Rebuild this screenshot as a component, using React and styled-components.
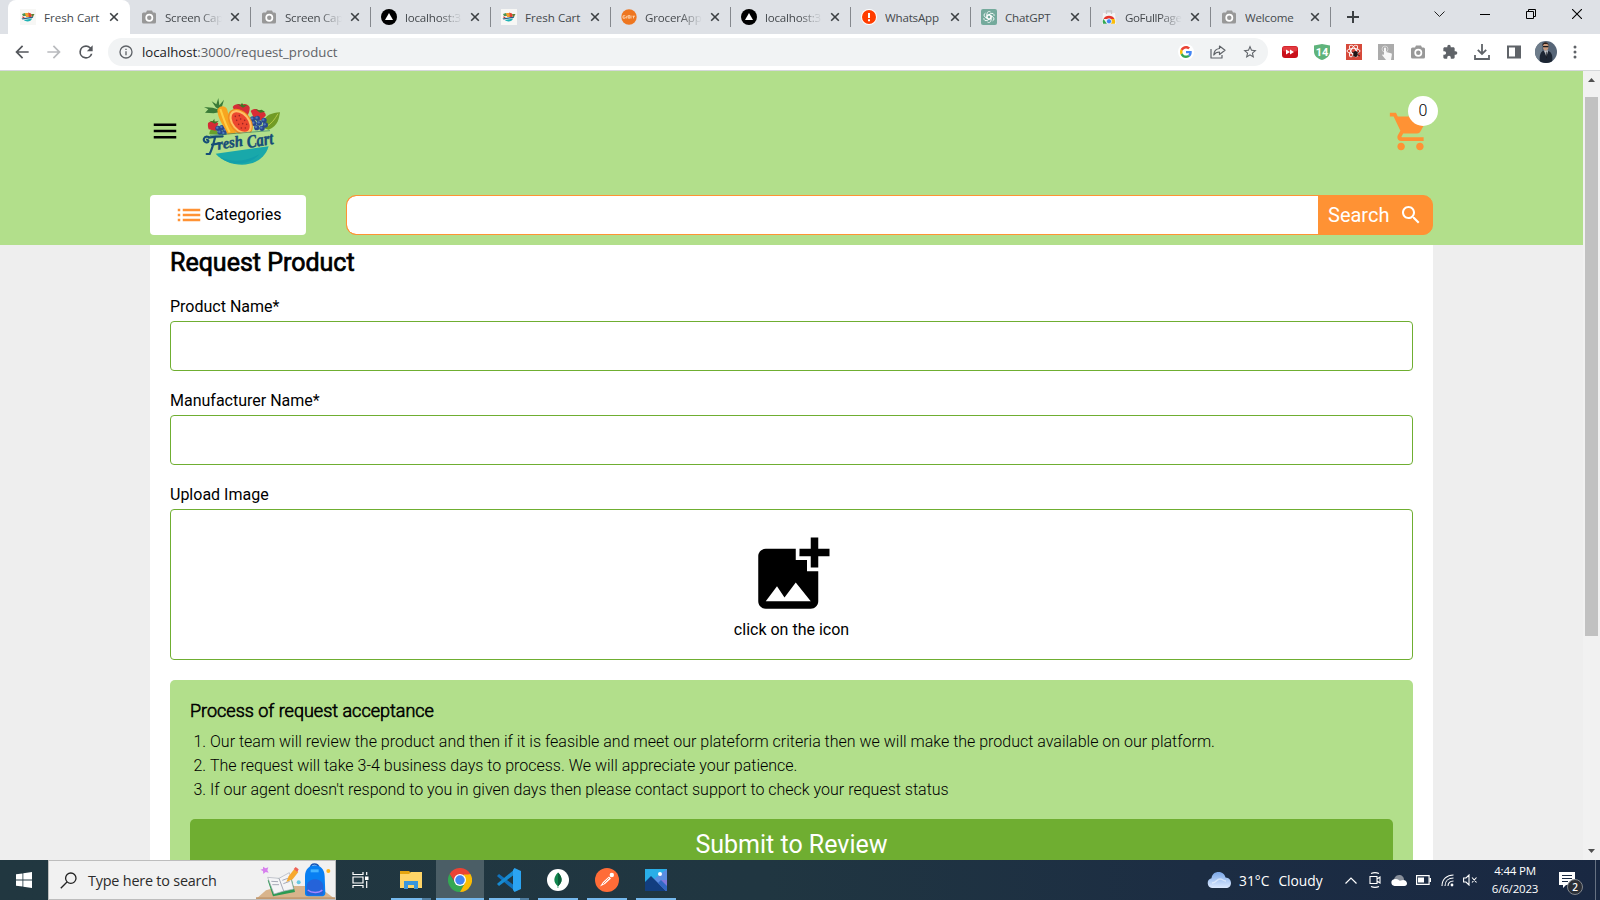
import React from "react";
import styled, { createGlobalStyle } from "styled-components";

const GlobalStyle = createGlobalStyle`
  *, *::before, *::after { box-sizing: border-box; }
  html, body { margin: 0; padding: 0; overflow: hidden; }
  body { font-family: Roboto, "Liberation Sans", sans-serif; color: #000; }
  svg { display: block; flex: none; }
  button, input { font-family: inherit; border: 0; padding: 0; margin: 0; }
`;

const UI_FONT = `"Open Sans", "Noto Sans", sans-serif`;

const Screen = styled.div`
  width: 1600px;
  height: 900px;
  display: flex;
  flex-direction: column;
  overflow: hidden;
`;

/* ---------- browser window ---------- */

const TabStrip = styled.div`
  height: 34px;
  background: #dee1e6;
  display: flex;
  padding-left: 8px;
  flex: none;
`;

const Tab = styled.div`
  width: ${(p) => (p.$active ? 122 : 120)}px;
  height: 34px;
  display: flex;
  align-items: center;
  padding: 0 11px 0 ${(p) => (p.$active ? 12 : 11)}px;
  background: ${(p) => (p.$active ? "#fff" : "transparent")};
  border-radius: 8px 8px 0 0;
  flex: none;
`;

const TabTitle = styled.span`
  font: 400 11.6px ${UI_FONT};
  letter-spacing: ${(p) => p.$track || 0}px;
  color: #45494d;
  width: 57px;
  margin-left: 8px;
  margin-right: 5px;
  white-space: nowrap;
  overflow: hidden;
  flex: none;
  ${(p) => p.$fade && "mask-image: linear-gradient(90deg, #000 60%, transparent 100%);"}
`;

const TabDivider = styled.div`
  width: 1px;
  height: 20px;
  margin-top: 7px;
  margin-right: -1px;
  background: ${(p) => (p.$hidden ? "transparent" : "#85888d")};
  flex: none;
`;

const NewTab = styled.div`
  width: 46px;
  display: flex;
  align-items: center;
  justify-content: center;
`;

const WindowButtons = styled.div`
  margin-left: auto;
  display: flex;
  height: 28px;
`;

const WindowButton = styled.div`
  width: 46px;
  display: flex;
  align-items: center;
  justify-content: center;
`;

const Toolbar = styled.div`
  height: 37px;
  background: #fff;
  border-bottom: 1px solid #d5d7da;
  display: flex;
  align-items: center;
  padding: 0 11px 0 12px;
  flex: none;
`;

const NavButton = styled.div`
  width: 32px;
  display: flex;
  justify-content: center;
  padding-right: 12px;
`;

const AddressBar = styled.div`
  width: 1160px;
  height: 28px;
  border-radius: 14px;
  background: #f1f3f4;
  display: flex;
  align-items: center;
  padding: 0 10px;
`;

const Address = styled.span`
  font: 400 13.2px ${UI_FONT};
  color: #5f6368;
  margin-left: 8px;
  flex: 1;
  b { font-weight: 400; color: #202124; }
`;

const AddressActions = styled.div`
  display: flex;
  gap: 16px;
`;

const Extensions = styled.div`
  display: flex;
  align-items: center;
  gap: 16px;
  margin-left: 14px;
  svg:nth-last-child(2) { margin: 0 -3px; }
  svg:last-child { margin-left: 3px; }
`;

const Viewport = styled.div`
  height: 789px;
  display: flex;
  background: #eee;
  overflow: hidden;
  flex: none;
`;

const Page = styled.div`
  width: 1583px;
  overflow: hidden;
`;

const ScrollTrack = styled.div`
  width: 17px;
  background: #f1f1f1;
  display: flex;
  flex-direction: column;
  align-items: center;
  padding: 7px 0;
  justify-content: space-between;
`;

const ScrollThumb = styled.div`
  width: 13px;
  height: 539px;
  background: #c1c1c1;
  margin: 15px 0 auto;
`;

/* ---------- shop header ---------- */

const Header = styled.header`
  height: 174px;
  background: #b2df8b;
  padding: 0 150px;
`;

const TopRow = styled.div`
  height: 120px;
  margin-bottom: 4px;
  display: flex;
  align-items: center;
`;

const Brand = styled.div`
  margin-left: 22px;
`;

const CartLink = styled.div`
  position: relative;
  margin-left: auto;
`;

const CartBadge = styled.span`
  position: absolute;
  top: -13px;
  right: -5px;
  width: 30px;
  height: 30px;
  border-radius: 50%;
  background: #fff;
  font-size: 16px;
  font-weight: 300;
  line-height: 29px;
  text-align: center;
`;

const SearchRow = styled.div`
  height: 40px;
  display: flex;
  gap: 40px;
`;

const CategoriesButton = styled.button`
  width: 156px;
  border-radius: 4px;
  background: #fff;
  color: #000;
  font-size: 16px;
  line-height: 38px;
  display: flex;
  align-items: center;
  justify-content: center;
  svg { margin-right: 1px; margin-left: -1px; }
`;

const SearchBox = styled.div`
  flex: 1;
  display: flex;
  border: 1px solid #ff9234;
  border-radius: 10px;
  background: #ff9234;
  overflow: hidden;
`;

const SearchInput = styled.input`
  flex: 1;
  background: #fff;
  border-radius: 9px 0 0 9px;
  outline: none;
`;

const SearchButton = styled.button`
  width: 114px;
  background: #ff9234;
  color: #fff;
  font-size: 20px;
  display: flex;
  align-items: center;
  justify-content: space-between;
  padding: 0 9px 0 10px;
`;

/* ---------- request form ---------- */

const Panel = styled.main`
  width: 1283px;
  height: 700px;
  margin: 0 auto;
  padding: 0 20px;
  background: #fff;
`;

const Title = styled.h1`
  margin: 0;
  height: 47px;
  line-height: 36px;
  font-size: 25px;
  font-weight: 400;
  -webkit-text-stroke: 0.7px #000;
`;

const Field = styled.div`
  margin-bottom: ${(p) => (p.$last ? 20 : 15)}px;
`;

const Label = styled.label`
  display: block;
  height: 29px;
  line-height: 29px;
  font-size: 16px;
`;

const TextInput = styled.input`
  display: block;
  width: 100%;
  height: 50px;
  border: 1px solid #6fae31;
  border-radius: 4px;
  background: #fff;
  outline: none;
`;

const UploadBox = styled.div`
  height: 151px;
  border: 1px solid #6fae31;
  border-radius: 4px;
  display: flex;
  flex-direction: column;
  align-items: center;
  padding-top: 20px;
  font-size: 16px;
  line-height: 19px;
`;

const Process = styled.section`
  height: 240px;
  background: #b2df8b;
  border-radius: 5px;
  padding: 20px;
`;

const ProcessTitle = styled.h2`
  margin: 0 0 4px;
  font-size: 18px;
  line-height: 22px;
  font-weight: 300;
  -webkit-text-stroke: 0.6px #000;
`;

const Steps = styled.ol`
  margin: 0;
  padding: 4px 0 0 20px;
  font-size: 16px;
  font-weight: 300;
  line-height: 24px;
`;

const SubmitButton = styled.button`
  display: block;
  width: 100%;
  height: 52px;
  margin-top: 17px;
  border-radius: 5px;
  background: #6fae31;
  color: #fff;
  font-size: 25px;
  line-height: 52px;
`;

/* ---------- desktop taskbar ---------- */

const Taskbar = styled.footer`
  height: 40px;
  background: linear-gradient(90deg, #213740 0%, #203641 48%, #1c2d43 75%, #192842 100%);
  display: flex;
  font-family: ${UI_FONT};
  color: #fff;
  flex: none;
`;

const TaskSlot = styled.div`
  width: ${(p) => p.$w}px;
  height: 40px;
  display: flex;
  align-items: center;
  justify-content: center;
  padding-right: ${(p) => p.$end || 0}px;
  flex: none;
`;

const TaskApp = styled.div`
  width: ${(p) => (p.$active ? 48 : 40)}px;
  height: 40px;
  margin-right: ${(p) => p.$gap || 0}px;
  display: flex;
  flex-direction: column;
  align-items: center;
  justify-content: space-between;
  background: ${(p) => (p.$active ? "#4b5e66" : "transparent")};
  flex: none;
`;

const TaskIcon = styled.div`
  height: 38px;
  display: flex;
  align-items: center;
  padding-top: 2px;
`;

const Underline = styled.div`
  width: 100%;
  height: 2px;
  background: ${(p) => (p.$split ? "linear-gradient(90deg, #76b9ed 78%, #4f7d9f 78%)" : "#76b9ed")};
`;

const TaskSearch = styled.div`
  width: 288px;
  height: 40px;
  border: 1px solid #bdbdbd;
  background: #f1f1f1;
  display: flex;
  align-items: center;
  padding-left: 11px;
  color: #2b2b2b;
  font-size: 14.4px;
  letter-spacing: -0.2px;
  overflow: hidden;
  flex: none;
  span { margin-left: 11px; margin-right: auto; line-height: 20px; padding-top: 1px; white-space: nowrap; }
`;

const Tray = styled.div`
  margin-left: auto;
  display: flex;
  align-items: center;
  height: 40px;
`;

const Weather = styled.div`
  display: flex;
  align-items: center;
  font-size: 13.8px;
  width: 138px;
  white-space: nowrap;
  svg { margin-right: 8px; }
  span + span { margin-left: 9px; }
`;

const Clock = styled.div`
  width: 58px;
  font-size: 11.5px;
  line-height: 18px;
  letter-spacing: -0.2px;
  text-align: center;
`;

const Notice = styled.div`
  position: relative;
  width: 16px;
  margin-left: 15px;
`;

const NoticeCount = styled.span`
  position: absolute;
  left: 8px;
  top: 7px;
  width: 16px;
  height: 16px;
  border-radius: 50%;
  border: 1px solid #83878d;
  background: #2b2f36;
  font-size: 10px;
  line-height: 14px;
  font-weight: 600;
  text-align: center;
`;

const DesktopEdge = styled.div`
  width: 5px;
  height: 40px;
  margin-left: 20px;
  border-left: 1px solid #667182;
`;

/* ---------- icons ---------- */

const Glyph = ({ size = 24, color = "currentColor", d }) => (
  <svg width={size} height={size} viewBox="0 0 24 24" fill={color}>
    <path d={d} />
  </svg>
);

const PATHS = {
  menu: "M3 18h18v-2H3v2zm0-5h18v-2H3v2zm0-7v2h18V6H3z",
  cart: "M7 18c-1.1 0-1.99.9-1.99 2S5.9 22 7 22s2-.9 2-2-.9-2-2-2zM1 2v2h2l3.6 7.59-1.35 2.45c-.16.28-.25.61-.25.96 0 1.1.9 2 2 2h12v-2H7.42c-.14 0-.25-.11-.25-.25l.03-.12.9-1.63h7.45c.75 0 1.41-.41 1.75-1.03l3.58-6.49c.08-.14.12-.31.12-.48 0-.55-.45-1-1-1H5.21l-.94-2H1zm16 16c-1.1 0-1.99.9-1.99 2s.89 2 1.99 2 2-.9 2-2-.9-2-2-2z",
  search: "M15.5 14h-.79l-.28-.27C15.41 12.59 16 11.11 16 9.5 16 5.91 13.09 3 9.5 3S3 5.91 3 9.5 5.91 16 9.5 16c1.61 0 3.09-.59 4.23-1.57l.27.28v.79l5 4.99L20.49 19l-4.99-5zm-6 0C7.01 14 5 11.99 5 9.5S7.01 5 9.5 5 14 7.01 14 9.5 11.99 14 9.5 14z",
  list: "M3 13h2v-2H3v2zm0 4h2v-2H3v2zm0-8h2V7H3v2zm4 4h14v-2H7v2zm0 4h14v-2H7v2zM7 7v2h14V7H7z",
  addPhoto: "M19 7v2.99s-1.99.01-2 0V7h-3s.01-1.99 0-2h3V2h2v3h3v2h-3zm-3 4V8h-3V5H5c-1.1 0-2 .9-2 2v12c0 1.1.9 2 2 2h12c1.1 0 2-.9 2-2v-8h-3zM5 19l3-4 2 3 3-4 4 5H5z",
  back: "M20 11H7.83l5.59-5.59L12 4l-8 8 8 8 1.41-1.41L7.83 13H20v-2z",
  forward: "M12 4l-1.41 1.41L16.17 11H4v2h12.17l-5.58 5.59L12 20l8-8z",
  reload: "M17.65 6.35A7.96 7.96 0 0 0 12 4a8 8 0 1 0 7.73 10h-2.08A6 6 0 1 1 12 6c1.66 0 3.14.69 4.22 1.78L13 11h7V4l-2.35 2.35z",
  info: "M11 17h2v-6h-2v6zm1-15a10 10 0 1 0 0 20 10 10 0 0 0 0-20zm0 18a8 8 0 1 1 0-16 8 8 0 0 1 0 16zM11 9h2V7h-2v2z",
  star: "M22 9.24l-7.19-.62L12 2 9.19 8.63 2 9.24l5.46 4.73L5.82 21 12 17.27 18.18 21l-1.63-7.03L22 9.24zM12 15.4l-3.76 2.27 1-4.28-3.32-2.88 4.38-.38L12 6.1l1.71 4.04 4.38.38-3.32 2.88 1 4.28L12 15.4z",
  puzzle: "M20.5 11H19V7c0-1.1-.9-2-2-2h-4V3.5a2.5 2.5 0 0 0-5 0V5H4c-1.1 0-1.99.9-1.99 2v3.8H3.5a2.7 2.7 0 0 1 0 5.4H2V20c0 1.1.9 2 2 2h3.8v-1.5a2.7 2.7 0 0 1 5.4 0V22H17c1.1 0 2-.9 2-2v-4h1.5a2.5 2.5 0 0 0 0-5z",
};

const CameraIcon = () => (
  <svg width="16" height="16" viewBox="0 0 16 16">
    <path d="M2.500 3.500H5L6 1.500h5l1 2h1.500a1.500 1.500 0 0 1 1.500 1.500v8a1.500 1.500 0 0 1-1.500 1.500h-11A1.500 1.500 0 0 1 1 13V5a1.500 1.500 0 0 1 1.500-1.500z" fill="#989898" />
    <circle cx="8.300" cy="8.700" r="3.100" fill="none" stroke="#fff" strokeWidth="1.700" />
  </svg>
);

const NextIcon = () => (
  <svg width="16" height="16" viewBox="0 0 16 16">
    <circle cx="8" cy="8" r="8" />
    <path d="M8 4l4 7H4z" fill="#fff" />
  </svg>
);

const FruitIcon = () => (
  <svg width="16" height="16" viewBox="0 0 16 16">
    <path fill="#f7f7f5" d="M0 0h16v16H0z" />
    <path d="M2 5l3-1 2 3H3z" fill="#4d9252" />
    <path d="M5 4h3l2 4H6z" fill="#f5a02d" />
    <path d="M8 3.500l3 1 1 3-3 1z" fill="#e2432e" />
    <path d="M11 5l3.500 0-2 3.500z" fill="#5f7f2f" />
    <path d="M2 7.500l3 .5-2 1.500z" fill="#c63634" />
    <path d="M1.500 9.500l12-2-1 1.500-10 1.500z" fill="#245f85" />
    <path d="M4 11l8-1.500c-.5 3-6 4-8 1.500z" fill="#1fb2b5" />
  </svg>
);

const GrocerIcon = () => (
  <svg width="16" height="16" viewBox="0 0 16 16">
    <circle cx="8" cy="8" r="7.700" fill="#ee7620" />
    <path d="M4.300 6.800H2v2.400h2.200V8M5.700 9.500V7.200h1M7.300 6.500h1.500v2.700H7.300zM10 6.500v3M11.500 7.200H14M12.500 7.200v2.200" fill="none" stroke="#ffe2c4" strokeWidth=".8" />
  </svg>
);

const AlertIcon = () => (
  <svg width="16" height="16" viewBox="0 0 16 16">
    <circle cx="8" cy="8" r="8" fill="#fff" />
    <circle cx="8" cy="8" r="7" fill="#ff3d00" />
    <path d="M7 4h2v5H7zM7 10.300h2v2H7z" fill="#fff" />
  </svg>
);

const GptIcon = () => (
  <svg width="16" height="16" viewBox="0 0 16 16">
    <rect width="16" height="16" rx="2" fill="#74aa9c" />
    <g fill="none" stroke="#fff" strokeWidth=".8">
      {[0, 60, 120, 180, 240, 300].map((a) => (
        <path key={a} transform={`rotate(${a} 8 8)`} d="M6 9.200V4.800a2.200 2.200 0 0 1 3.600-1.800M6 6.900l2-1.200 3.400 2" />
      ))}
    </g>
  </svg>
);

const StoreIcon = () => (
  <svg width="16" height="16" viewBox="0 0 16 16">
    <path d="M2 4h12l1 11H1z" fill="#f5f5f5" />
    <path d="M5.500 5V2h5v3" fill="none" stroke="#c9c9c9" strokeWidth="1.300" />
    <path d="M2.500 10a6 5.500 0 0 1 11 0z" fill="#e5372c" />
    <path d="M2.500 10L6 14.800H2a5 5 0 0 1 .5-4.800z" fill="#35a853" />
    <path d="M10 10h3.500c.8 1.600.8 3.300.3 4.800H8z" fill="#fbbd09" />
    <circle cx="8" cy="12.300" r="2.600" fill="#4285f4" stroke="#fff" strokeWidth=".8" />
  </svg>
);

const CloseIcon = () => (
  <svg width="16" height="16" viewBox="0 0 16 16">
    <path d="M4.200 4.200l7.600 7.600M11.800 4.200l-7.600 7.600" stroke="#3c4043" strokeWidth="1.600" />
  </svg>
);

const GoogleIcon = () => (
  <svg width="16" height="16" viewBox="0 0 48 48">
    <circle cx="24" cy="24" r="24" fill="#fff" />
    <g transform="translate(6 6) scale(.75)">
      <path fill="#ea4335" d="M24 9.500c3.540 0 6.710 1.220 9.210 3.600l6.850-6.850C35.900 2.380 30.470 0 24 0 14.620 0 6.510 5.380 2.560 13.220l7.980 6.190C12.430 13.720 17.740 9.500 24 9.500z" />
      <path fill="#4285f4" d="M46.980 24.550c0-1.570-.15-3.090-.38-4.550H24v9.020h12.940c-.58 2.960-2.260 5.480-4.780 7.180l7.730 6c4.510-4.180 7.090-10.360 7.090-17.650z" />
      <path fill="#fbbc05" d="M10.530 28.590c-.48-1.450-.76-2.990-.76-4.590s.27-3.140.76-4.590l-7.980-6.190C.92 16.460 0 20.120 0 24c0 3.880.92 7.540 2.560 10.780l7.970-6.190z" />
      <path fill="#34a853" d="M24 48c6.480 0 11.930-2.130 15.890-5.810l-7.730-6c-2.150 1.450-4.920 2.300-8.160 2.300-6.260 0-11.570-4.220-13.470-9.910l-7.980 6.190C6.510 42.620 14.620 48 24 48z" />
    </g>
  </svg>
);

const ShareIcon = () => (
  <svg width="16" height="16" viewBox="0 0 16 16" fill="none" stroke="#5f6368" strokeWidth="1.200" strokeLinejoin="round">
    <path d="M1 5v9h11v-3M9.500 2l5.500 4.300-5.500 4.200V8C6.500 8 5 9 3.800 11 4 7 6 4.800 9.500 4.500z" />
  </svg>
);

const RedForwardIcon = () => (
  <svg width="16" height="16" viewBox="0 0 16 16">
    <rect y="2" width="16" height="12" rx="3" fill="#c9101a" />
    <rect x=".5" y="2.500" width="15" height="5" rx="2.500" fill="#e23a40" />
    <path d="M4 5.500L8 8l-4 2.500zM8 5.500L12 8l-4 2.500z" fill="#fff" />
  </svg>
);

const ShieldIcon = () => (
  <svg width="16" height="16" viewBox="0 0 16 16">
    <path d="M8 0l8 1.500v6C16 12 12.500 14.500 8 16 3.500 14.500 0 12 0 7.500v-6z" fill="#5fb37b" />
    <text x="8" y="11.500" fontSize="11" fontWeight="700" fontFamily="Roboto, sans-serif" fill="#fff" textAnchor="middle">14</text>
  </svg>
);

const BugIcon = () => (
  <svg width="16" height="16" viewBox="0 0 16 16">
    <path fill="#d6493a" d="M0 0h16v16H0z" />
    <g fill="none" stroke="#fff" strokeWidth=".9">
      <ellipse cx="7.500" cy="7" rx="6.500" ry="2.500" />
      <ellipse cx="7.500" cy="7" rx="6.500" ry="2.500" transform="rotate(60 7.500 7)" />
      <ellipse cx="7.500" cy="7" rx="6.500" ry="2.500" transform="rotate(120 7.500 7)" />
    </g>
    <ellipse cx="9.500" cy="10" rx="2.200" ry="3" fill="#1e1515" />
    <path d="M6 8l8 4M13 7.500L6.500 12.500" stroke="#1e1515" strokeWidth=".8" />
  </svg>
);

const TouchIcon = () => (
  <svg width="16" height="16" viewBox="0 0 16 16">
    <path fill="#ababab" d="M0 0h16v16H0z" />
    <circle cx="7" cy="5" r="3" fill="none" stroke="#d4d4d4" />
    <path d="M6 4.500a1 1 0 0 1 2 0V8l5 1.200c1 .3 1 1 .8 2L13 16H8l-4-5 1-.8 1 .8z" fill="#f7f7f7" />
  </svg>
);

const DownloadIcon = () => (
  <svg width="16" height="16" viewBox="0 0 16 16" fill="none" stroke="#5f6368" strokeWidth="1.800">
    <path d="M8 0v9.500M3.800 5.800L8 10l4.200-4.200M1 11v4h14v-4" />
  </svg>
);

const SidePanelIcon = () => (
  <svg width="16" height="16" viewBox="0 0 16 16">
    <path d="M1 1.500h14v13H1zM3 3.500v9h6v-9z" fill="#5f6368" fillRule="evenodd" />
  </svg>
);

const Avatar = () => (
  <svg width="22" height="22" viewBox="0 0 22 22">
    <defs>
      <clipPath id="avatarClip"><circle cx="11" cy="11" r="11" /></clipPath>
    </defs>
    <g clipPath="url(#avatarClip)">
      <path d="M0 0h22v22H0z" fill="#566577" />
      <path d="M0 0h7v22H0z" fill="#6e7d8b" />
      <path d="M5 22c-1-6 0-11 3-12h5c4 1 5 5 4 12z" fill="#1c2533" />
      <path d="M9 9.500h4L11.500 16z" fill="#e5e8ec" />
      <path d="M10.700 10.500h.9l.3 6-.8 1z" fill="#16181e" />
      <ellipse cx="10.700" cy="5.500" rx="2.800" ry="3.900" fill="#c99a7c" />
      <path d="M7.500 5c-.5-5 6.500-5 6 0l-1-2H9z" fill="#2a1f1b" />
      <path d="M8 5h5.500v1.300H8z" fill="#1b1a1c" />
    </g>
  </svg>
);

const DotsIcon = () => (
  <svg width="4" height="16" viewBox="0 0 4 16" fill="#5f6368">
    <circle cx="2" cy="3" r="1.500" /><circle cx="2" cy="8" r="1.500" /><circle cx="2" cy="13" r="1.500" />
  </svg>
);

const Arrow = ({ down }) => (
  <svg width="7" height="4" viewBox="0 0 7 4"><path d={down ? "M0 0h7L3.500 4z" : "M0 4h7L3.500 0z"} fill="#505050" /></svg>
);

const berries = [[368, 134], [382, 132], [372, 147], [388, 146], [402, 138], [406, 152], [380, 160], [396, 162], [264, 162], [276, 160], [286, 168], [270, 174], [282, 178]];
const seeds = [[316, 126], [328, 124], [320, 138], [332, 134], [344, 138], [326, 150], [338, 148], [350, 150], [334, 161], [346, 161]];

const FreshCartLogo = () => (
  <svg width="80" height="70" viewBox="216 65 240 210">
    <path d="M402 140c5-18 24-24 48-26-3 14-4 42-34 52l-14-4z" fill="#719b25" />
    <path d="M410 156c14-8 24-20 34-38" stroke="#b3c947" strokeWidth="3" fill="none" />
    <path d="M238 180c0-14 8-20 20-18l6 18z" fill="#68a02c" />
    <path d="M268 106l-20-6-26-2 13 7-10 10 26 2 16-3 6-8 9-30-14 17-3-22-6 19-14-9 12 18z" fill="#3a7b38" />
    <path d="M308 98c7-12 22-10 27-7 9-5 21-1 24 8 1 15-7 27-15 36-13-8-30-20-36-37z" fill="#d52e36" />
    <path d="M320 88l12 5 4-8 4 8 12-1-13 8z" fill="#3d7825" />
    <path d="M362 110c9-9 20-7 25-1 13-1 22 7 20 15l-14 14-20-4z" fill="#d82c36" />
    <path d="M375 104l12 4 8-2 10 6-15 3z" fill="#3d7825" />
    <path d="M234 146c8-8 24-7 31 1l-8 22-21-4c-2-6-3-12-2-19z" fill="#d42b35" />
    <path d="M237 139l11 2 5-8 1 9 13-3-12 9z" fill="#3d7825" />
    {berries.map(([x, y]) => (
      <g key={`${x}-${y}`}>
        <circle cx={x} cy={y} r="8" fill="#28498d" />
        <circle cx={x - 2} cy={y - 2} r="3.500" fill="#5279bd" />
      </g>
    ))}
    <path d="M262 108c4-14 22-17 29-4 5 18 8 32 12 46l16 28-26 3c-9-24-29-43-31-73z" fill="#f7a51f" />
    <path d="M271 104c7 21 14 44 28 70" stroke="#ffcf48" strokeWidth="6" fill="none" />
    <ellipse cx="331" cy="143" rx="31" ry="45" transform="rotate(-40 331 143)" fill="#f08d1f" />
    <ellipse cx="332" cy="143" rx="27" ry="41" transform="rotate(-40 332 143)" fill="#ffc066" />
    <ellipse cx="332" cy="143" rx="21" ry="34" transform="rotate(-40 332 143)" fill="#ec472f" />
    {seeds.map(([x, y]) => <circle key={`${x}-${y}`} cx={x} cy={y} r="2.400" fill="#9c2424" />)}
    <path d="M240 186l186-18-2 42-180 25z" fill="#b2df8b" />
    <path d="M240 183c60-5 120-9 180-14" stroke="#2f8168" strokeWidth="2" fill="none" />
    <path d="M257 238l159-22c-22 72-119 67-159 22z" fill="#19a8aa" />
    <path d="M272 249c38 18 80 10 116-9-27 32-89 38-116 9z" fill="#129faa" />
    <path d="M236 188c-15-5-20 12-8 16 8 2 10-6 3-8M236 190c16-3 28-4 42-4M255 190c-5 20-8 32-16 49h-9M246 211l22-4" stroke="#164d77" strokeWidth="6.500" strokeLinecap="round" fill="none" />
    <g fill="#164d77" stroke="#164d77" strokeWidth="1.500" fontFamily="Liberation Serif, serif" fontStyle="italic" fontWeight="700">
      <text transform="translate(264 226) rotate(-9)" fontSize="46" textLength="77" lengthAdjust="spacingAndGlyphs">resh</text>
      <text transform="translate(353 221) rotate(-9)" fontSize="54" textLength="80" lengthAdjust="spacingAndGlyphs">Cart</text>
    </g>
  </svg>
);

const WindowsIcon = () => (
  <svg width="16" height="16" viewBox="0 0 16 16" fill="#fff">
    <path d="M0 2.300L6.500 1.400v6.200H0zM7.300 1.300L16 0v7.600H7.300zM0 8.400h6.500v6.200L0 13.700zM7.300 8.400H16V16l-8.700-1.300z" />
  </svg>
);

const SearchLineIcon = () => (
  <svg width="17" height="17" viewBox="0 0 17 17" fill="none" stroke="#222" strokeWidth="1.300">
    <circle cx="10.800" cy="6.200" r="5.200" /><path d="M7 10L.8 16.200" />
  </svg>
);

const SchoolArt = () => (
  <svg width="79" height="38" viewBox="0 0 237 114">
    <path d="M0 114L30 88l45-13h110l52 39z" fill="#d8b48c" />
    <path d="M0 109h237v5H0z" fill="#c39a70" />
    <path d="M21 17l8 5 8-3-3 9 4 7-9-2-7 6-1-9-8-4 8-2z" fill="#d780ed" />
    <path d="M35 58l70-13 12 48-66 13z" fill="#2b9b53" />
    <path d="M35 49l34 3 31-17 13 49-29 6-30 9z" fill="#f4f4f6" stroke="#a9adb8" strokeWidth="2" />
    <path d="M69 52l14 38M46 61l20 1M49 71l20 0M79 58l19-7M82 68l19-7" stroke="#a6a9b7" strokeWidth="3" />
    <path d="M91 63l7-17 17-22 12 9-17 22z" fill="#f7a82d" />
    <path d="M113 24l6-6 9 7-4 8z" fill="#ee6257" />
    <circle cx="128" cy="64" r="6" fill="#66c9e5" />
    <circle cx="217" cy="30" r="6" fill="#ffb51c" />
    <path d="M164 21c-3-16 25-16 24 0" stroke="#1754b5" strokeWidth="5" fill="none" />
    <path d="M147 46c0-44 59-44 59 0l2 50c0 7-4 10-12 10h-38c-8 0-12-4-11-10z" fill="#087ff2" />
    <path d="M152 78c0-31 50-31 50 0v17c0 5-3 8-8 8h-34c-5 0-8-3-8-8z" fill="#2563d9" />
    <path d="M155 87c12 10 34 10 44 0" stroke="#aa87ff" strokeWidth="4" fill="none" />
    <path d="M164 25h24v9h-24z" fill="#43b3ff" />
  </svg>
);

const TaskViewIcon = () => (
  <svg width="17" height="16" viewBox="0 0 17 16" fill="none" stroke="#fff" strokeWidth="1.200">
    <path d="M1 0v2.500h10V0M1 5h10v6H1zM1 16v-2.500h10V16M14.700 0v3M14.700 9v7" /><path d="M13 4.500h3.500v3.500H13z" fill="#fff" stroke="none" />
  </svg>
);

const FolderIcon = () => (
  <svg width="22" height="18" viewBox="0 0 22 18">
    <path d="M0 0h9l2 2h11v15H0z" fill="#e5a50f" />
    <path d="M0 3h9l2-2h11v16H0z" fill="#ffd567" />
    <path d="M4 10h14v8h-4v-4H8v4H4z" fill="#3a96dd" />
  </svg>
);

const ChromeIcon = () => (
  <svg width="24" height="24" viewBox="0 0 48 48">
    <path d="M3.200 12A24 24 0 0 1 44.800 12L24 14 14 28z" fill="#ea4335" />
    <path d="M3.200 12A24 24 0 0 0 24 48l10-18H14z" fill="#34a853" />
    <path d="M44.800 12A24 24 0 0 1 24 48l10-18-3-18z" fill="#fbbc05" />
    <path d="M24 12h20.800L40 13H24z" fill="#ea4335" />
    <circle cx="24" cy="24" r="12" fill="#fff" />
    <circle cx="24" cy="24" r="9.500" fill="#4285f4" />
  </svg>
);

const CodeIcon = () => (
  <svg width="24" height="24" viewBox="0 0 24 24">
    <path d="M0 8l2-2 16 12v5L1 9z" fill="#1173bd" />
    <path d="M0 16l2 2L18 6V1L1 15z" fill="#168bd2" />
    <path d="M17.500 0L24 3v18l-6.500 3-1.500-2V2z" fill="#2ba4f2" />
  </svg>
);

const MongoIcon = () => (
  <svg width="22" height="22" viewBox="0 0 22 22">
    <circle cx="11" cy="11" r="11" fill="#fff" />
    <path d="M11 3.500c5 5 4.500 10 .3 13.500V19h-.7v-2C6.500 13.500 6 8.500 11 3.500z" fill="#10854d" />
    <path d="M11 3.500c5 5 4.500 10 .3 13.500H11z" fill="#0c5f3b" />
  </svg>
);

const PostmanIcon = () => (
  <svg width="24" height="24" viewBox="0 0 24 24">
    <circle cx="12" cy="12" r="12" fill="#ff6c37" />
    <path d="M5 18.500l3-4.500 6-5.500 2 2L10 16z" fill="#fff" />
    <circle cx="16.800" cy="7" r="2.200" fill="#fff" />
    <path d="M8 16l6-6" stroke="#ff6c37" strokeWidth=".8" />
  </svg>
);

const PhotosIcon = () => (
  <svg width="22" height="22" viewBox="0 0 22 22">
    <path d="M0 0h22v22H0z" fill="#29aee8" />
    <path d="M22 0v22H11L9 10z" fill="#5b8de0" />
    <path d="M22 11v11h-9l3-11z" fill="#8278dc" />
    <path d="M0 13l6-6 15 15H0z" fill="#123e80" />
    <path d="M13 14l3-3 6 6v5h-1z" fill="#3268c4" />
    <circle cx="15" cy="5" r="2" fill="#fff" />
  </svg>
);

const CloudIcon = () => (
  <svg width="24" height="16" viewBox="0 0 24 16">
    <defs>
      <linearGradient id="cloudFill" x2="0" y2="1"><stop stopColor="#7aa7e8" /><stop offset="1" stopColor="#dceaff" /></linearGradient>
    </defs>
    <path d="M5 16a5 5 0 0 1-.5-9.800C5 2 8 0 11.500 0c4 0 6.500 2.500 7 5.500C22 5.600 24 8 24 11c0 3-2 5-5 5z" fill="url(#cloudFill)" />
    <path d="M5 11c5 0 4-4 8-4 3 0 3 2 6 2" stroke="#f0f6ff" strokeWidth="1.500" fill="none" opacity=".6" />
  </svg>
);

const CaretIcon = () => (
  <svg width="12" height="7" viewBox="0 0 12 7"><path d="M.5 6.500L6 1l5.500 5.500" fill="none" stroke="#fff" strokeWidth="1.200" /></svg>
);
const MeetIcon = () => (
  <svg width="12" height="16" viewBox="0 0 12 16" fill="none" stroke="#fff" strokeWidth="1.100">
    <path d="M2 1.500q4-1.700 8 0M2 14.500q4 1.700 8 0M1 4.500h7v7H1zM8 7l3-2v6L8 9" />
  </svg>
);
const DriveIcon = () => (
  <svg width="16" height="11" viewBox="0 0 16 11">
    <path d="M3 8C2 3 5 0 8 0s5 2 5 5z" fill="#888f9a" />
    <path d="M3.500 11A3.400 3.400 0 0 1 3 4.300c3-1 4 0 6 1.500 4-2 7 0 7 2.700 0 1.500-1 2.500-2.500 2.500z" fill="#fff" />
  </svg>
);
const BatteryIcon = () => (
  <svg width="15" height="10" viewBox="0 0 15 10"><path d="M.6.600h12.500v8.800H.6z" fill="none" stroke="#fff" strokeWidth="1.200" /><path d="M2 2.500h6v5H2zM13.500 3H15v4h-1.500z" fill="#fff" /></svg>
);
const WifiIcon = () => (
  <svg width="14" height="13" viewBox="0 0 14 13" fill="none" stroke="#fff" strokeWidth="1.100">
    <path d="M1 12C1 5 6 1 12.500 1M4 12C4 7 7.500 4 12.500 4M7 12c0-3 2-5 5.500-5" /><circle cx="11" cy="11" r="1.400" fill="#fff" stroke="none" />
  </svg>
);
const MuteIcon = () => (
  <svg width="14" height="12" viewBox="0 0 14 12" fill="none" stroke="#fff" strokeWidth="1.100"><path d="M.6 4h2.400l3-3v10L3 8H.6zM9 3.500l4.500 5M13.500 3.500L9 8.500" /></svg>
);
const NoteIcon = () => (
  <svg width="16" height="16" viewBox="0 0 16 16"><path d="M0 0h16v13H7l-3 3v-3H0z" fill="#fff" /><path d="M3 3.500h10M3 6.500h10M3 9.500h6" stroke="#1a2a43" strokeWidth="1.200" /></svg>
);

/* ---------- content ---------- */

const tabs = [
  { title: "Fresh Cart", icon: <FruitIcon />, active: true },
  { title: "Screen Cap", icon: <CameraIcon />, fade: true, track: -0.25 },
  { title: "Screen Cap", icon: <CameraIcon />, fade: true, track: -0.25 },
  { title: "localhost:3", icon: <NextIcon />, fade: true, track: -0.2 },
  { title: "Fresh Cart", icon: <FruitIcon /> },
  { title: "GrocerApp", icon: <GrocerIcon />, fade: true, track: -0.2 },
  { title: "localhost:3", icon: <NextIcon />, fade: true, track: -0.2 },
  { title: "WhatsApp", icon: <AlertIcon />, track: -0.2 },
  { title: "ChatGPT", icon: <GptIcon />, track: -0.2 },
  { title: "GoFullPage", icon: <StoreIcon />, fade: true, track: -0.4 },
  { title: "Welcome", icon: <CameraIcon />, track: -0.2 },
];

const steps = [
  "Our team will review the product and then if it is feasible and meet our plateform criteria then we will make the product available on our platform.",
  "The request will take 3-4 business days to process. We will appreciate your patience.",
  "If our agent doesn't respond to you in given days then please contact support to check your request status",
];

function BrowserChrome() {
  return (
    <>
      <TabStrip>
        {tabs.map((t, i) => (
          <React.Fragment key={i}>
            <Tab $active={t.active}>
              {t.icon}
              <TabTitle $fade={t.fade} $track={t.track}>{t.title}</TabTitle>
              <CloseIcon />
            </Tab>
            <TabDivider $hidden={i === 0} />
          </React.Fragment>
        ))}
        <NewTab>
          <svg width="12" height="12" viewBox="0 0 12 12"><path d="M6 0v12M0 6h12" stroke="#3c4043" strokeWidth="2" /></svg>
        </NewTab>
        <WindowButtons>
          <WindowButton><svg width="11" height="7" viewBox="0 0 11 7"><path d="M.5.500l5 5 5-5" fill="none" stroke="#222" /></svg></WindowButton>
          <WindowButton><svg width="10" height="1" viewBox="0 0 10 1"><path d="M0 0h10v1H0z" /></svg></WindowButton>
          <WindowButton><svg width="10" height="10" viewBox="0 0 10 10" fill="none" stroke="#000"><path d="M.5 2.500h7v7h-7zM2.500 2.500v-2h7v7h-2" /></svg></WindowButton>
          <WindowButton><svg width="10" height="10" viewBox="0 0 10 10"><path d="M0 0l10 10M10 0L0 10" stroke="#000" strokeWidth="1.100" /></svg></WindowButton>
        </WindowButtons>
      </TabStrip>
      <Toolbar>
        <NavButton><Glyph size={20} color="#54575c" d={PATHS.back} /></NavButton>
        <NavButton><Glyph size={20} color="#b9bbbe" d={PATHS.forward} /></NavButton>
        <NavButton><Glyph size={20} color="#54575c" d={PATHS.reload} /></NavButton>
        <AddressBar>
          <Glyph size={16} color="#5f6368" d={PATHS.info} />
          <Address><b>localhost</b>:3000/request_product</Address>
          <AddressActions>
            <GoogleIcon /><ShareIcon /><Glyph size={16} color="#5f6368" d={PATHS.star} />
          </AddressActions>
        </AddressBar>
        <Extensions>
          <RedForwardIcon /><ShieldIcon /><BugIcon /><TouchIcon /><CameraIcon />
          <Glyph size={16} color="#5f6368" d={PATHS.puzzle} />
          <DownloadIcon /><SidePanelIcon /><Avatar /><DotsIcon />
        </Extensions>
      </Toolbar>
    </>
  );
}

function ShopPage() {
  return (
    <Page>
      <Header>
        <TopRow>
          <Glyph size={30} d={PATHS.menu} />
          <Brand><FreshCartLogo /></Brand>
          <CartLink>
            <Glyph size={45} color="#ff9234" d={PATHS.cart} />
            <CartBadge>0</CartBadge>
          </CartLink>
        </TopRow>
        <SearchRow>
          <CategoriesButton><Glyph size={30} color="#ff9234" d={PATHS.list} />Categories</CategoriesButton>
          <SearchBox>
            <SearchInput aria-label="Search" />
            <SearchButton>Search<Glyph size={24} d={PATHS.search} /></SearchButton>
          </SearchBox>
        </SearchRow>
      </Header>
      <Panel>
        <Title>Request Product</Title>
        <Field><Label>Product Name*</Label><TextInput aria-label="Product Name" /></Field>
        <Field><Label>Manufacturer Name*</Label><TextInput aria-label="Manufacturer Name" /></Field>
        <Field $last>
          <Label>Upload Image</Label>
          <UploadBox><Glyph size={90} d={PATHS.addPhoto} />click on the icon</UploadBox>
        </Field>
        <Process>
          <ProcessTitle>Process of request acceptance</ProcessTitle>
          <Steps>{steps.map((s) => <li key={s}>{s}</li>)}</Steps>
          <SubmitButton>Submit to Review</SubmitButton>
        </Process>
      </Panel>
    </Page>
  );
}

function DesktopTaskbar() {
  return (
    <Taskbar>
      <TaskSlot $w={48}><WindowsIcon /></TaskSlot>
      <TaskSearch><SearchLineIcon /><span>Type here to search</span><SchoolArt /></TaskSearch>
      <TaskSlot $w={55} $end={7}><TaskViewIcon /></TaskSlot>
      <TaskApp $gap={5}><TaskIcon><FolderIcon /></TaskIcon><Underline $split /></TaskApp>
      <TaskApp $active $gap={5}><TaskIcon><ChromeIcon /></TaskIcon><Underline /></TaskApp>
      <TaskApp $gap={9}><TaskIcon><CodeIcon /></TaskIcon><Underline $split /></TaskApp>
      <TaskApp $gap={9}><TaskIcon><MongoIcon /></TaskIcon><Underline /></TaskApp>
      <TaskApp $gap={9}><TaskIcon><PostmanIcon /></TaskIcon><Underline /></TaskApp>
      <TaskApp><TaskIcon><PhotosIcon /></TaskIcon><Underline /></TaskApp>
      <Tray>
        <Weather><CloudIcon /><span>31°C</span><span>Cloudy</span></Weather>
        <TaskSlot $w={12}><CaretIcon /></TaskSlot>
        <TaskSlot $w={36}><MeetIcon /></TaskSlot>
        <TaskSlot $w={12}><DriveIcon /></TaskSlot>
        <TaskSlot $w={37}><BatteryIcon /></TaskSlot>
        <TaskSlot $w={12}><WifiIcon /></TaskSlot>
        <TaskSlot $w={32}><MuteIcon /></TaskSlot>
        <Clock>4:44 PM<br />6/6/2023</Clock>
        <Notice><NoteIcon /><NoticeCount>2</NoticeCount></Notice>
        <DesktopEdge />
      </Tray>
    </Taskbar>
  );
}

export default function App() {
  return (
    <Screen>
      <GlobalStyle />
      <BrowserChrome />
      <Viewport>
        <ShopPage />
        <ScrollTrack><Arrow /><ScrollThumb /><Arrow down /></ScrollTrack>
      </Viewport>
      <DesktopTaskbar />
    </Screen>
  );
}
